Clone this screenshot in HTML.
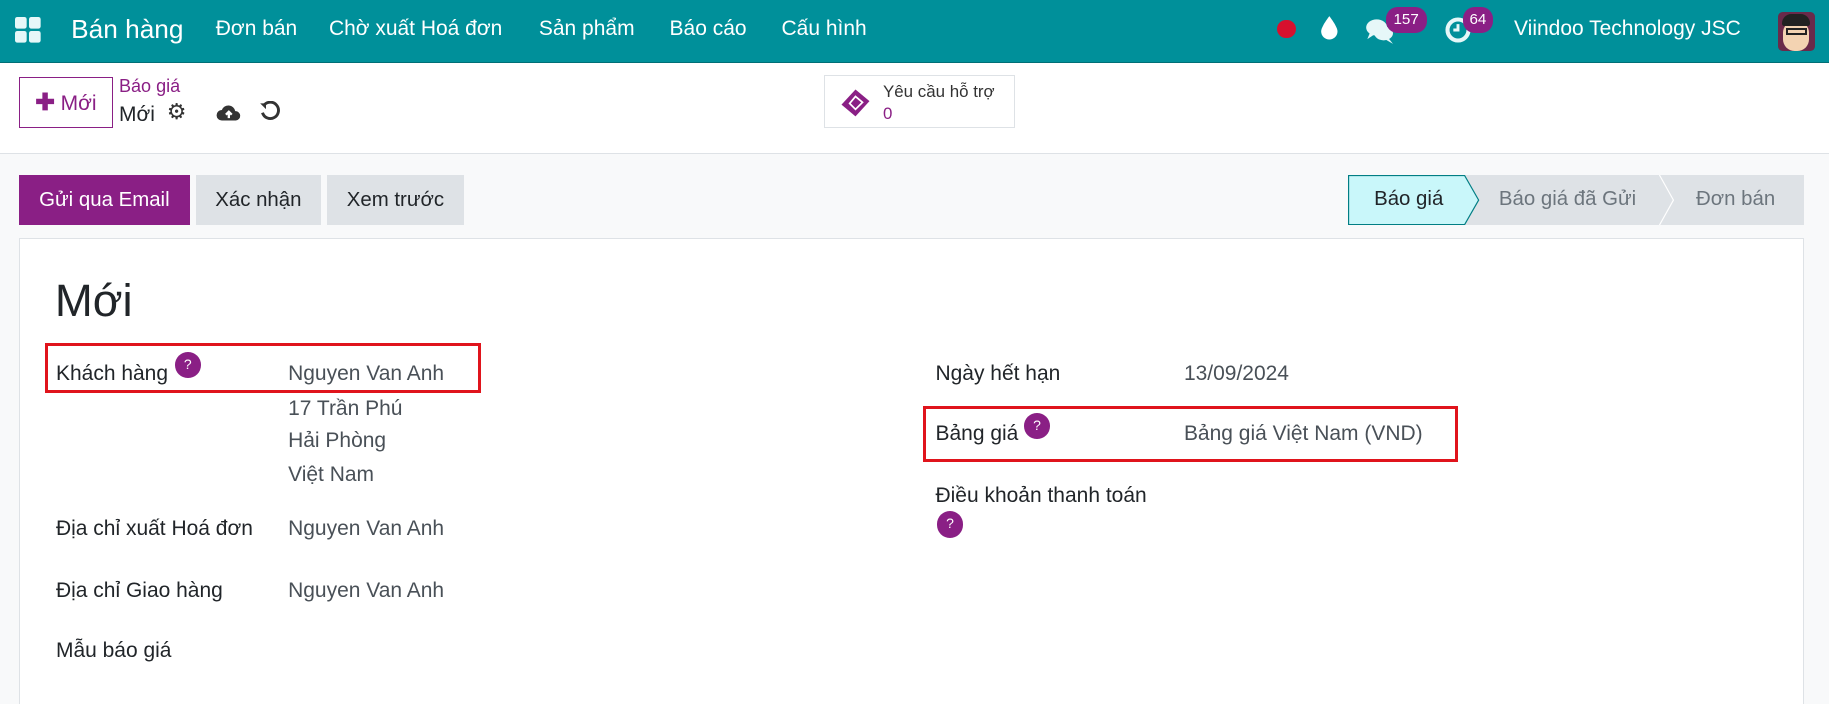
<!DOCTYPE html>
<html><head><meta charset="utf-8"><style>
*{box-sizing:border-box;margin:0;padding:0}
html,body{width:1829px;height:704px;overflow:hidden}
body{background:#f8f9fa;font-family:"Liberation Sans",sans-serif;color:#212529}
#root{zoom:1.16645;width:1568px;height:604px;position:relative}
.a{position:absolute;white-space:nowrap}
.nav{left:0;top:0;width:1568px;height:54px;background:#00909a;border-bottom:1px solid #016f76}
.cp{left:0;top:54px;width:1568px;height:78px;background:#fff;border-bottom:1px solid #dee2e6}
.btn{height:43px;top:150px;font-size:17.5px;line-height:43px;text-align:center}
.sheet{left:16px;top:204px;width:1531px;height:420px;background:#fff;border:1px solid #dee2e6}
.lbl{font-size:18px;color:#212529}
.val{font-size:18px;color:#495057}
.q{width:22px;height:22px;border-radius:50%;background:#8a1f85;color:#fff;font-size:12px;text-align:center;line-height:22px}
.red{border:3px solid #e0141c}
.badge{background:#8a1f85;color:#fff;font-size:13px;border-radius:10px;height:22px;line-height:22px;text-align:center}
.nt{color:#fff;font-size:18px;top:15px}
</style></head><body><div id="root">
<div class="a nav"></div>
<svg class="a" style="left:13px;top:15px" width="22" height="22" viewBox="0 0 22 22"><rect x="0" y="0" width="10" height="10" rx="2" fill="#e6f7f8"/><rect x="12" y="0" width="10" height="10" rx="2" fill="#e6f7f8"/><rect x="0" y="12" width="10" height="10" rx="2" fill="#e6f7f8"/><rect x="12" y="12" width="10" height="10" rx="2" fill="#e6f7f8"/></svg>
<div class="a" style="left:61px;top:12px;color:#fff;font-size:22.5px">Bán hàng</div>
<div class="a nt" style="left:185px">Đơn bán</div>
<div class="a nt" style="left:282px">Chờ xuất Hoá đơn</div>
<div class="a nt" style="left:462px">Sản phẩm</div>
<div class="a nt" style="left:574px">Báo cáo</div>
<div class="a nt" style="left:670px">Cấu hình</div>
<div class="a" style="left:1095px;top:17px;width:16px;height:16px;border-radius:50%;background:#d7102e"></div>
<svg class="a" style="left:1132px;top:13px" width="16" height="22" viewBox="0 0 16 22"><path d="M8 1 C8 1 1 10 1 14 a7 7 0 0 0 14 0 C15 10 8 1 8 1z" fill="#fff"/></svg>
<svg class="a" style="left:1170px;top:15px" width="26" height="24" viewBox="0 0 26 24"><ellipse cx="10" cy="9" rx="9" ry="7" fill="#e6f7f8"/><ellipse cx="16" cy="14" rx="8" ry="6" fill="#e6f7f8"/><path d="M4 14 L2 19 L8 15z" fill="#e6f7f8"/><path d="M20 18 L24 23 L17 19z" fill="#e6f7f8"/></svg>
<div class="a badge" style="left:1188px;top:6px;width:35px">157</div>
<svg class="a" style="left:1238px;top:14px" width="24" height="24" viewBox="0 0 24 24"><circle cx="12" cy="12" r="9" fill="none" stroke="#e6f7f8" stroke-width="3.5"/><path d="M12 7 V12 H8" stroke="#e6f7f8" stroke-width="2.5" fill="none"/></svg>
<div class="a badge" style="left:1254px;top:6px;width:26px">64</div>
<div class="a nt" style="left:1298px">Viindoo Technology JSC</div>
<div class="a" style="left:1524px;top:10px;width:32px;height:34px;border-radius:4px;background:#6a2a4a;overflow:hidden"><div class="a" style="left:5px;top:8px;width:22px;height:26px;border-radius:10px;background:#f3d3b2"></div><div class="a" style="left:4px;top:2px;width:24px;height:10px;border-radius:8px 8px 2px 2px;background:#222"></div><div class="a" style="left:7px;top:14px;width:18px;height:6px;border:2px solid #222"></div></div>

<div class="a cp"></div>
<div class="a" style="left:16px;top:66px;width:81px;height:44px;border:1px solid #8a1f85;color:#8a1f85;font-size:18px;line-height:42px;text-align:center"><b style="font-size:20px">✚</b> Mới</div>
<div class="a" style="left:102px;top:65px;color:#8a1f85;font-size:15.5px">Báo giá</div>
<div class="a" style="left:102px;top:88px;font-size:18px">Mới</div>
<div class="a" style="left:143px;top:85px;font-size:19px;color:#333">⚙</div>
<svg class="a" style="left:185px;top:88px" width="22" height="16" viewBox="0 0 22 16"><path d="M5 15 a4.5 4.5 0 0 1 0-9 a6 6 0 0 1 11.5 1 a4 4 0 0 1 0.5 8z" fill="#333"/><path d="M11 13 V8 M8.5 10 L11 7.5 L13.5 10" stroke="#fff" stroke-width="2" fill="none"/></svg>
<svg class="a" style="left:222px;top:87px" width="18" height="18" viewBox="0 0 18 18"><path d="M4 4 A7 7 0 1 1 3 10" stroke="#333" stroke-width="2.5" fill="none"/><path d="M1 2 L6 2 L6 7z" fill="#333"/></svg>
<div class="a" style="left:706px;top:64px;width:164px;height:46px;border:1px solid #dee2e6;background:#fff"></div>
<svg class="a" style="left:718px;top:74px" width="30" height="28" viewBox="0 0 30 28"><path d="M3 16 L15 3 L27 13 L15 26z" fill="#8a1f85"/><path d="M10 15 L15 9 L21 14 L15 20z" fill="none" stroke="#fff" stroke-width="1.5"/></svg>
<div class="a" style="left:757px;top:70px;font-size:14.5px;color:#333">Yêu cầu hỗ trợ</div>
<div class="a" style="left:757px;top:89px;font-size:14.5px;color:#8a1f85">0</div>

<div class="a btn" style="left:16px;width:147px;background:#8a1f85;color:#fff">Gửi qua Email</div>
<div class="a btn" style="left:168px;width:107px;background:#dee2e6">Xác nhận</div>
<div class="a btn" style="left:280px;width:118px;background:#dee2e6">Xem trước</div>

<svg class="a" style="left:1156px;top:150px" width="391" height="43" viewBox="0 0 391 43"><rect x="100" y="0" width="291" height="43" fill="#dee2e6"/><path d="M0.5 0.5 H100 L112 21.5 L100 42.5 H0.5z" fill="#c9f7fa" stroke="#017e84"/><path d="M267 0 L279 21.5 L267 43" fill="none" stroke="#fff" stroke-width="1"/></svg>
<div class="a" style="left:1178px;top:161px;font-size:17.5px">Báo giá</div>
<div class="a" style="left:1285px;top:161px;font-size:17.5px;color:#6c757d">Báo giá đã Gửi</div>
<div class="a" style="left:1454px;top:161px;font-size:17.5px;color:#6c757d">Đơn bán</div>

<div class="a sheet"></div>
<div class="a" style="left:47px;top:236px;font-size:39px">Mới</div>
<div class="a lbl" style="left:48px;top:310px">Khách hàng</div>
<div class="a q" style="left:150px;top:302px">?</div>
<div class="a val" style="left:247px;top:310px">Nguyen Van Anh</div>
<div class="a val" style="left:247px;top:340px">17 Trần Phú</div>
<div class="a val" style="left:247px;top:368px">Hải Phòng</div>
<div class="a val" style="left:247px;top:397px">Việt Nam</div>
<div class="a lbl" style="left:48px;top:443px">Địa chỉ xuất Hoá đơn</div>
<div class="a val" style="left:247px;top:443px">Nguyen Van Anh</div>
<div class="a lbl" style="left:48px;top:496px">Địa chỉ Giao hàng</div>
<div class="a val" style="left:247px;top:496px">Nguyen Van Anh</div>
<div class="a lbl" style="left:48px;top:548px">Mẫu báo giá</div>
<div class="a red" style="left:39px;top:294px;width:373px;height:43px"></div>

<div class="a lbl" style="left:802px;top:310px">Ngày hết hạn</div>
<div class="a val" style="left:1015px;top:310px">13/09/2024</div>
<div class="a lbl" style="left:802px;top:362px">Bảng giá</div>
<div class="a q" style="left:878px;top:354px">?</div>
<div class="a val" style="left:1015px;top:362px">Bảng giá Việt Nam (VND)</div>
<div class="a red" style="left:791px;top:348px;width:459px;height:48px"></div>
<div class="a lbl" style="left:802px;top:415px">Điều khoản thanh toán</div>
<div class="a q" style="left:803px;top:438px;width:23px;height:23px">?</div>
</div></body></html>
